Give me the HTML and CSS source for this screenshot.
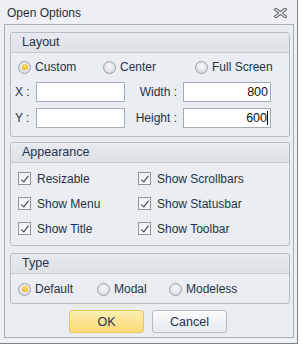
FILE: index.html
```html
<!DOCTYPE html>
<html lang="en">
<head>
<meta charset="UTF-8">
<title>Open Options</title>
<link rel="stylesheet" href="styles.css">
</head>
<body>
<div class="window">
    <div class="title-bar">
        <span>Open Options</span>
        <svg class="close" width="13" height="10" viewBox="0 0 13 10">
            <path d="M2 1.5 L11 8.5 M11 1.5 L2 8.5" stroke="#5a5d62" stroke-width="3.4" stroke-linecap="square"/>
            <path d="M2 1.5 L11 8.5 M11 1.5 L2 8.5" stroke="#eef0f2" stroke-width="1.4" stroke-linecap="square"/>
        </svg>
    </div>
    <div class="panel">
        <div class="group layout">
            <div class="group-head">Layout</div>
            <div class="group-body">
                <div class="radio-row">
                    <label class="radio checked"><span class="dot"></span>Custom</label>
                    <label class="radio"><span class="dot"></span>Center</label>
                    <label class="radio"><span class="dot"></span>Full Screen</label>
                </div>
                <div class="field-row">
                    <span class="lbl">X :</span>
                    <div class="input"></div>
                    <span class="lbl right">Width :</span>
                    <div class="input num">800</div>
                </div>
                <div class="field-row">
                    <span class="lbl">Y :</span>
                    <div class="input"></div>
                    <span class="lbl right">Height :</span>
                    <div class="input num"><span class="caret">600</span></div>
                </div>
            </div>
        </div>
        <div class="group appearance">
            <div class="group-head">Appearance</div>
            <div class="group-body checks">
                <label class="check"><span class="box"></span>Resizable</label>
                <label class="check"><span class="box"></span>Show Scrollbars</label>
                <label class="check"><span class="box"></span>Show Menu</label>
                <label class="check"><span class="box"></span>Show Statusbar</label>
                <label class="check"><span class="box"></span>Show Title</label>
                <label class="check"><span class="box"></span>Show Toolbar</label>
            </div>
        </div>
        <div class="group type">
            <div class="group-head">Type</div>
            <div class="group-body">
                <div class="radio-row type-row">
                    <label class="radio checked"><span class="dot"></span>Default</label>
                    <label class="radio"><span class="dot"></span>Modal</label>
                    <label class="radio"><span class="dot"></span>Modeless</label>
                </div>
            </div>
        </div>
        <div class="buttons">
            <button class="btn ok">OK</button>
            <button class="btn">Cancel</button>
        </div>
    </div>
</div>
</body>
</html>
```

FILE: styles.css
```css
body, html {
    margin: 0;
    background-color: #fff;
    font-family: "Liberation Sans", Arial, sans-serif;
    font-size: 12px;
    color: #24334a;
}

.window {
    width: 297px;
    height: 343px;
    background-color: #eef0f3;
    border-right: 1px solid #7d8085;
    border-bottom: 1px solid #7d8085;
    box-sizing: content-box;
}

.title-bar {
    height: 24px;
    display: flex;
    align-items: center;
    justify-content: space-between;
    padding: 2px 10px 0 7px;
    box-sizing: border-box;
    color: #2c2f35;
}

.close {
    display: block;
}

.panel {
    margin-left: 4px;
    width: 290px;
    height: 314px;
    box-sizing: border-box;
    border: 1px solid #a9aeb4;
    background-color: #e9ecf0;
    padding: 7px 3px 0 5px;
}

.group {
    border: 1px solid #b7bcc2;
    border-radius: 3px;
    background-color: #eaedf1;
    margin-bottom: 5px;
    overflow: hidden;
}

.group.appearance {
    margin-bottom: 7px;
}

.group-head {
    height: 19px;
    line-height: 19px;
    padding-left: 11px;
    font-size: 12.5px;
    background: linear-gradient(#e7eaee, #dde1e6);
    border-bottom: 1px solid #c7ccd2;
}

.layout .group-body {
    height: 83px;
    padding: 7px 0 0 4px;
    box-sizing: border-box;
}

.radio-row {
    display: grid;
    grid-template-columns: 85px 92px auto;
    height: 14px;
    margin-left: 3px;
}

.radio, .check {
    display: flex;
    align-items: center;
    white-space: nowrap;
}

.radio .dot {
    width: 11px;
    height: 11px;
    border-radius: 50%;
    border: 1px solid #9ca1a8;
    background: radial-gradient(circle at 50% 40%, #f8f8f9 0%, #e3e5e8 55%, #c4c8cd 100%);
    margin-right: 4px;
    position: relative;
}

.radio.checked .dot::after {
    content: "";
    position: absolute;
    left: 2.5px;
    top: 2.5px;
    width: 6px;
    height: 6px;
    border-radius: 50%;
    background: radial-gradient(circle at 50% 35%, #ffe27a 0%, #f6b90c 70%, #e29a00 100%);
}

.field-row {
    display: grid;
    grid-template-columns: 21px 89px 58px 88px;
    align-items: center;
    height: 20px;
    margin-top: 8px;
}

.field-row + .field-row {
    margin-top: 6px;
}

.lbl.right {
    text-align: right;
    padding-right: 6px;
}

.input {
    height: 20px;
    box-sizing: border-box;
    border: 1px solid #a5acb5;
    background-color: #fff;
    color: #111;
    line-height: 18px;
    padding: 0 2px;
    font-size: 12.5px;
}

.input.num {
    text-align: right;
}

.caret {
    border-right: 1px solid #000;
}

.checks {
    display: grid;
    grid-template-columns: 120px auto;
    grid-auto-rows: 25px;
    padding: 3px 0 4px 7px;
}

.check .box {
    width: 11px;
    height: 11px;
    border: 1px solid #8e949b;
    background: linear-gradient(#eef0f2, #fafbfc);
    margin-right: 6px;
    position: relative;
}

.check .box::after {
    content: "";
    position: absolute;
    left: 3.5px;
    top: 0.5px;
    width: 2.5px;
    height: 6.5px;
    border-right: 1.5px solid #3a3d42;
    border-bottom: 1.5px solid #3a3d42;
    transform: rotate(38deg);
}

.type .group-body {
    padding: 8px 0 7px 4px;
}

.type-row {
    grid-template-columns: 79px 72px auto;
}

.buttons {
    display: flex;
    gap: 8px;
    padding: 1px 0 0 59px;
}

.btn {
    width: 75px;
    height: 23px;
    font-family: "Liberation Sans", Arial, sans-serif;
    font-size: 12.5px;
    color: #24334a;
    border: 1px solid #b8bcc2;
    border-radius: 3px;
    background: linear-gradient(#fbfcfd, #e6e9ed);
    padding: 0;
}

.btn.ok {
    border-color: #e6c85a;
    background: linear-gradient(#fdeeb0, #fbd978);
}
```
